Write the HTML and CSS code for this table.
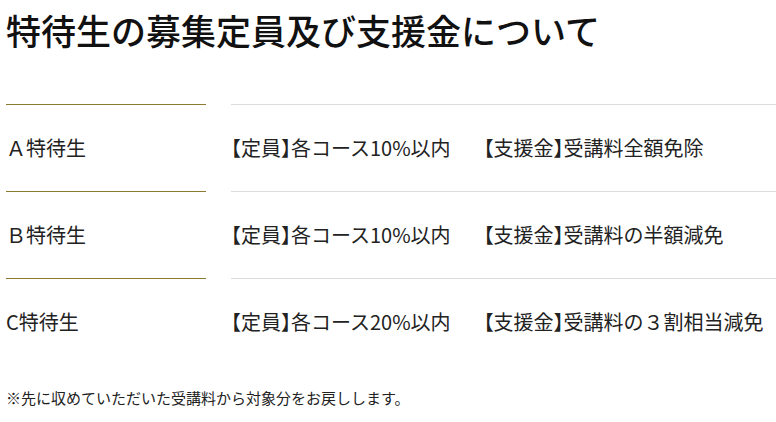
FILE: index.html
```html
<!DOCTYPE html>
<html lang="ja">
<head>
<meta charset="utf-8">
<link rel="stylesheet" href="styles.css">
</head>
<body>
<h1 class="title">特待生の募集定員及び支援金について</h1>
<dl class="table">
  <div class="row">
    <dt class="label">Ａ特待生</dt>
    <dd class="desc"><span class="cap">【定員】各コース10%以内</span><span class="fund">【支援金】受講料全額免除</span></dd>
  </div>
  <div class="row">
    <dt class="label">Ｂ特待生</dt>
    <dd class="desc"><span class="cap">【定員】各コース10%以内</span><span class="fund">【支援金】受講料の半額減免</span></dd>
  </div>
  <div class="row">
    <dt class="label">C特待生</dt>
    <dd class="desc"><span class="cap">【定員】各コース20%以内</span><span class="fund">【支援金】受講料の３割相当減免</span></dd>
  </div>
</dl>
<p class="note">※先に収めていただいた受講料から対象分をお戻しします。</p>
</body>
</html>
```
FILE: styles.css
```css
html, body {
  margin: 0;
  padding: 0;
  background: #fff;
}
body {
  padding-left: 6px;
  font-family: "Noto Sans CJK JP", "Noto Sans", sans-serif;
  color: #222;
  overflow: hidden;
}
.title {
  margin: 0;
  padding-top: 4px;
  font-size: 35px;
  font-weight: 500;
  line-height: 52px;
  color: #111;
}
.table {
  margin: 48px 0 0;
}
.row {
  display: flex;
  gap: 25px;
}
.label, .desc {
  margin: 0;
  padding: 28px 0 29px;
  font-size: 20px;
  line-height: 29px;
}
.label {
  flex: 0 0 200px;
  border-top: 1px solid #8c7a2e;
}
.desc {
  flex: 1;
  border-top: 1px solid #dcdcdc;
  font-feature-settings: "halt";
}
.fund {
  margin-left: 33px;
}
.note {
  margin: 22px 0 0;
  font-size: 15px;
  line-height: 22px;
}
```
